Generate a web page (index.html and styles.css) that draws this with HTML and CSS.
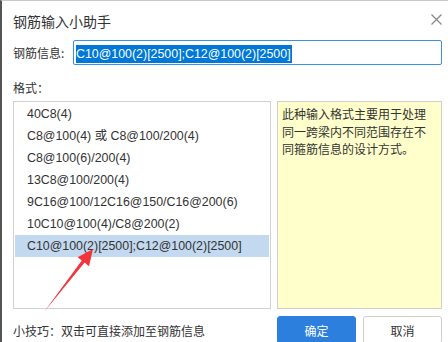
FILE: index.html
```html
<!DOCTYPE html>
<html lang="zh-CN">
  <head>
    <meta charset="UTF-8" />
    <meta name="viewport" content="width=device-width, initial-scale=1.0" />
    <title>钢筋输入小助手</title>
    <link rel="stylesheet" href="styles.css">
  </head>
  <body>
    <div class="dialog">
      <div class="title-bar">
        <span class="title">钢筋输入小助手</span>
        <svg class="close" width="11" height="11" viewBox="0 0 11 11">
          <path d="M0.5 0.5 L10.5 10.5 M10.5 0.5 L0.5 10.5" stroke="#8a8a8a" stroke-width="1.3" fill="none" />
        </svg>
      </div>

      <div class="info-row">
        <label class="info-label">钢筋信息:</label>
        <div class="info-input"><span class="selected">C10@100(2)[2500];C12@100(2)[2500]</span></div>
      </div>

      <div class="format-label">格式：</div>

      <div class="panels">
        <ul class="format-list">
          <li>40C8(4)</li>
          <li>C8@100(4) 或 C8@100/200(4)</li>
          <li>C8@100(6)/200(4)</li>
          <li>13C8@100/200(4)</li>
          <li>9C16@100/12C16@150/C16@200(6)</li>
          <li>10C10@100(4)/C8@200(2)</li>
          <li class="active">C10@100(2)[2500];C12@100(2)[2500]</li>
        </ul>
        <div class="help-box">此种输入格式主要用于处理同一跨梁内不同范围存在不同箍筋信息的设计方式。</div>
      </div>

      <div class="bottom-row">
        <div class="tip">小技巧：双击可直接添加至钢筋信息</div>
        <div class="buttons">
          <button class="btn btn-primary">确定</button>
          <button class="btn">取消</button>
        </div>
      </div>

      <!-- annotation arrow drawn over the list -->
      <svg class="arrow" width="448" height="342" viewBox="0 0 448 342">
        <polygon points="44,312 84.6,262.6 89,266.2 93,249 77.6,257.2 81.8,260.4" fill="#f2353a" />
      </svg>
    </div>
  </body>
</html>
```

FILE: styles.css
```css
body {
  margin: 0;
  font-family: "Liberation Sans", "Noto Sans CJK SC", sans-serif;
  color: #333;
  background: #fff;
}

.dialog {
  position: relative;
  width: 448px;
  height: 342px;
  box-sizing: border-box;
  border-top: 1px solid #c9c9c9;
  border-left: 2px solid #555;
  padding: 0 6px 0 11px;
  overflow: hidden;
}

.title-bar {
  display: flex;
  justify-content: space-between;
  align-items: center;
  height: 39px;
}

.title {
  font-family: "Noto Sans CJK SC", sans-serif;
  font-size: 14px;
  color: #333;
}

.close {
  margin-top: -2px;
}

.info-row {
  display: flex;
  align-items: center;
  height: 25px;
}

.info-label {
  width: 60px;
  font-family: "Noto Sans CJK SC", sans-serif;
  font-size: 12px;
}

.info-input {
  flex: 1;
  height: 25px;
  box-sizing: border-box;
  border: 1px solid #3d8ee8;
  border-radius: 2px;
  padding: 3px 2px 0;
}

.selected {
  display: inline-block;
  height: 18px;
  line-height: 18px;
  font-size: 12.4px;
  background-color: #0078d7;
  color: #fff;
  padding-right: 1px;
}

.format-label {
  margin-top: 14px;
  height: 18px;
  line-height: 18px;
  font-family: "Noto Sans CJK SC", sans-serif;
  font-size: 12px;
}

.panels {
  display: flex;
  gap: 6px;
  margin-top: 4px;
  height: 208px;
}

.format-list {
  width: 258px;
  box-sizing: border-box;
  margin: 0;
  padding: 1px;
  list-style: none;
  border: 1px solid #d2d2d2;
}

.format-list li {
  height: 22px;
  line-height: 22px;
  padding-left: 12px;
  font-size: 12.4px;
  color: #333;
  white-space: nowrap;
}

.format-list li.active {
  background-color: #c3d9f0;
}

.help-box {
  width: 165px;
  box-sizing: border-box;
  border: 1px solid #cfcfcf;
  background-color: #ffffcc;
  padding: 3px 8px 0 4px;
  font-family: "Noto Sans CJK SC", sans-serif;
  font-size: 12px;
  line-height: 17.5px;
  color: #333;
}

.bottom-row {
  display: flex;
  gap: 6px;
  margin-top: 7px;
  height: 28px;
  align-items: center;
}

.tip {
  width: 258px;
  font-family: "Noto Sans CJK SC", sans-serif;
  font-size: 12px;
  padding-top: 1px;
}

.buttons {
  display: flex;
  gap: 7px;
  width: 165px;
}

.btn {
  width: 79px;
  height: 28px;
  border: 1px solid #cfcfcf;
  border-radius: 3px;
  background-color: #fff;
  font-family: "Noto Sans CJK SC", sans-serif;
  font-size: 12px;
  color: #333;
  padding: 0;
}

.btn-primary {
  background-color: #2d7fde;
  border-color: #2d7fde;
  color: #fff;
}

.arrow {
  position: absolute;
  top: -1px;
  left: -2px;
  pointer-events: none;
}
```
